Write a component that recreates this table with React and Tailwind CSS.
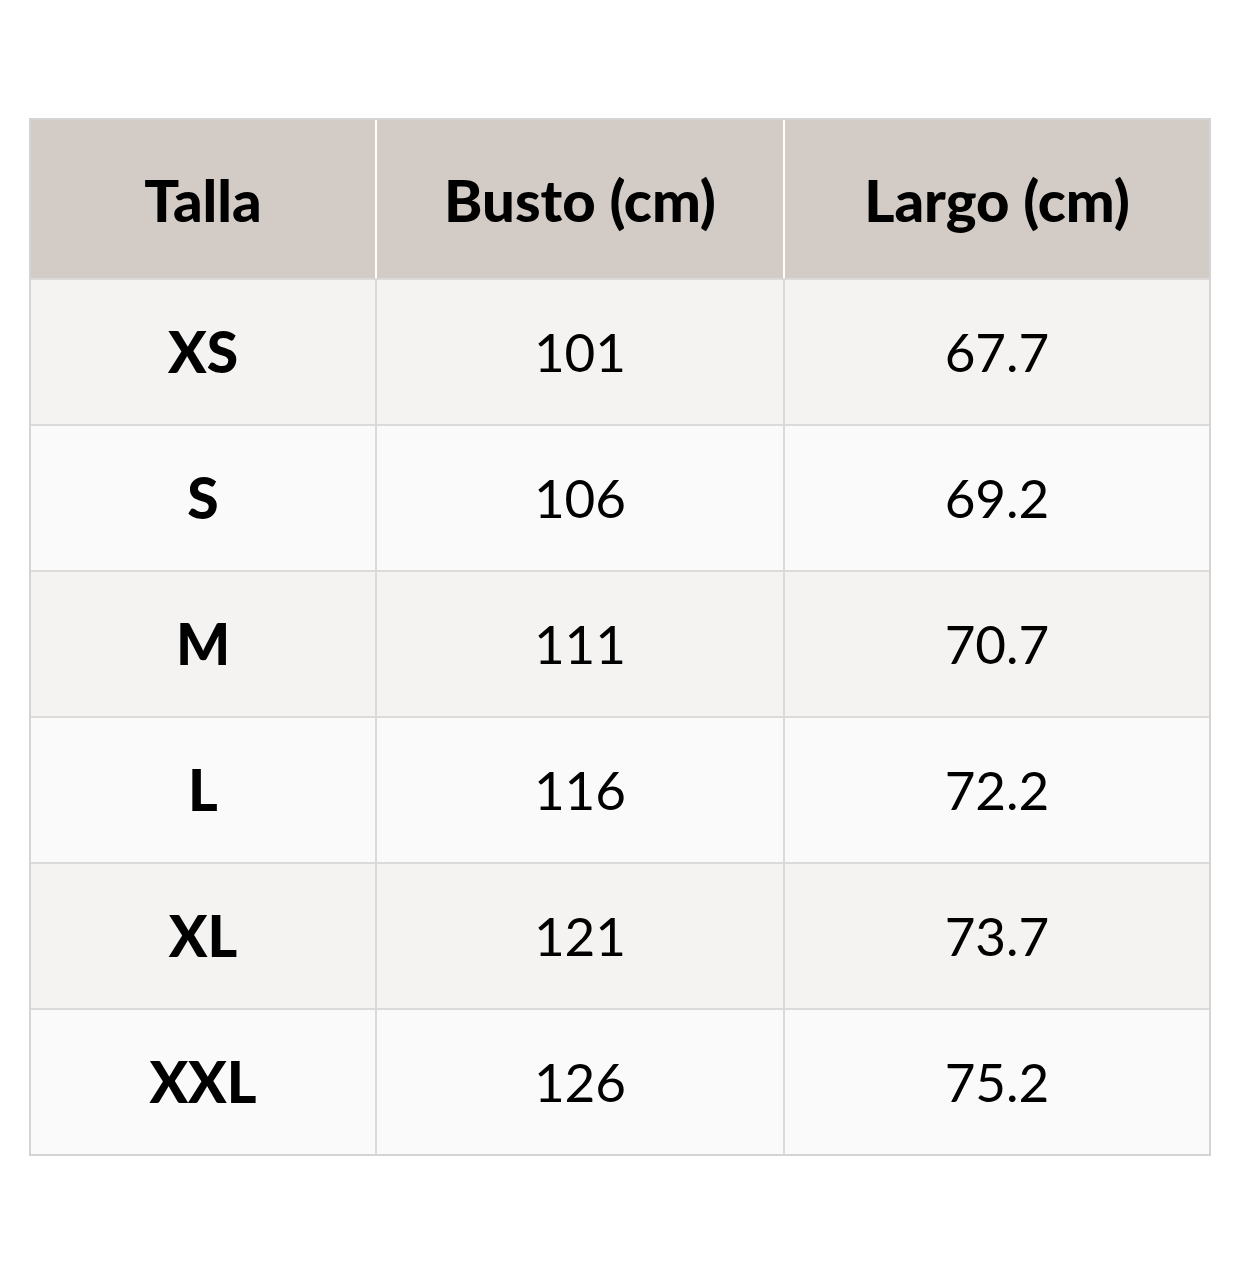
import React from "react";

const rows = [
  { size: "XS", bust: "101", length: "67.7" },
  { size: "S", bust: "106", length: "69.2" },
  { size: "M", bust: "111", length: "70.7" },
  { size: "L", bust: "116", length: "72.2" },
  { size: "XL", bust: "121", length: "73.7" },
  { size: "XXL", bust: "126", length: "75.2" },
];

const App = () => {
  return (
    <div
      className="min-h-[1268px] w-full bg-white pt-[118px] px-[29px]"
      style={{ fontFamily: "Lato, 'Noto Sans', sans-serif" }}
    >
      <div className="w-[1182px] border-2 border-[#d6d4d2] text-black">
        {/* Header */}
        <div className="grid grid-cols-[344px_408px_426px] h-[158px] bg-[#d3cbc5]">
          <div className="flex items-center justify-center text-[58px] font-black">
            Talla
          </div>
          <div className="flex items-center justify-center text-[58px] font-black border-l-2 border-white">
            Busto (cm)
          </div>
          <div className="flex items-center justify-center text-[58px] font-black border-l-2 border-white">
            Largo (cm)
          </div>
        </div>

        {/* Rows */}
        {rows.map((r, i) => (
          <div
            key={r.size}
            className={`grid grid-cols-[344px_408px_426px] h-[146px] border-t-2 border-[#dcdad8] ${
              i % 2 === 0 ? "bg-[#f4f3f2]" : "bg-[#fafafa]"
            }`}
          >
            <div className="flex items-center justify-center text-[57px] font-black">
              {r.size}
            </div>
            <div className="flex items-center justify-center text-[53px] border-l-2 border-[#dcdad8]">
              {r.bust}
            </div>
            <div className="flex items-center justify-center text-[53px] border-l-2 border-[#dcdad8]">
              {r.length}
            </div>
          </div>
        ))}
      </div>
    </div>
  );
};

export default App;
